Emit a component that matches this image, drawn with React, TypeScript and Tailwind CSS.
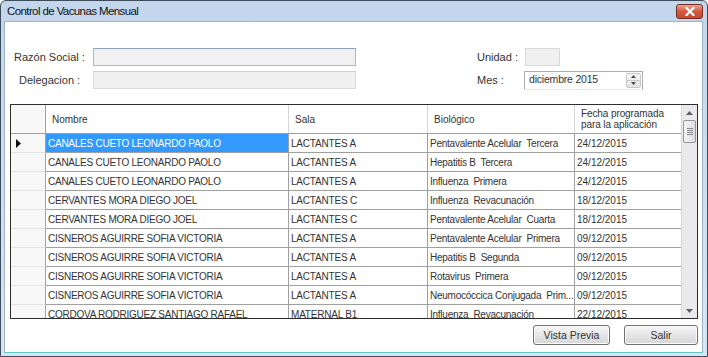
import React from 'react';

type Fila = { nombre: string; sala: string; biologico: string; fecha: string };

const filas: Fila[] = [
  { nombre: 'CANALES CUETO LEONARDO PAOLO', sala: 'LACTANTES A', biologico: 'Pentavalente Acelular  Tercera', fecha: '24/12/2015' },
  { nombre: 'CANALES CUETO LEONARDO PAOLO', sala: 'LACTANTES A', biologico: 'Hepatitis B  Tercera', fecha: '24/12/2015' },
  { nombre: 'CANALES CUETO LEONARDO PAOLO', sala: 'LACTANTES A', biologico: 'Influenza  Primera', fecha: '24/12/2015' },
  { nombre: 'CERVANTES MORA DIEGO JOEL', sala: 'LACTANTES C', biologico: 'Influenza  Revacunación', fecha: '18/12/2015' },
  { nombre: 'CERVANTES MORA DIEGO JOEL', sala: 'LACTANTES C', biologico: 'Pentavalente Acelular  Cuarta', fecha: '18/12/2015' },
  { nombre: 'CISNEROS AGUIRRE SOFIA VICTORIA', sala: 'LACTANTES A', biologico: 'Pentavalente Acelular  Primera', fecha: '09/12/2015' },
  { nombre: 'CISNEROS AGUIRRE SOFIA VICTORIA', sala: 'LACTANTES A', biologico: 'Hepatitis B  Segunda', fecha: '09/12/2015' },
  { nombre: 'CISNEROS AGUIRRE SOFIA VICTORIA', sala: 'LACTANTES A', biologico: 'Rotavirus  Primera', fecha: '09/12/2015' },
  { nombre: 'CISNEROS AGUIRRE SOFIA VICTORIA', sala: 'LACTANTES A', biologico: 'Neumocóccica Conjugada  Prim...', fecha: '09/12/2015' },
  { nombre: 'CORDOVA RODRIGUEZ SANTIAGO RAFAEL', sala: 'MATERNAL B1', biologico: 'Influenza  Revacunación', fecha: '22/12/2015' },
];

const Boton = ({ label, ancho }: { label: string; ancho: string }) => (
  <button className={`${ancho} h-[20px] rounded-[3px] border border-[#707070] bg-gradient-to-b from-[#f6f6f6] via-[#e6e6e6] to-[#d6d6d6] text-[10.5px] text-[#333] leading-none shadow-[inset_0_0_0_1px_#fcfcfc]`}>
    {label}
  </button>
);

const App: React.FC = () => {
  return (
    <div className="w-[708px] h-[357px] flex flex-col bg-gradient-to-b from-[#c3d6eb] to-[#d8e6f4] border border-[#3d4d5e] rounded-t-[6px] overflow-hidden text-[#1e1e1e]" style={{ fontFamily: '"Liberation Sans", Arial, sans-serif' }}>
      {/* barra de titulo */}
      <div className="h-[20px] shrink-0 flex items-start justify-between pl-[6px] pr-[4px]">
        <span className="text-[11.5px] tracking-[-0.6px] leading-[20px] text-[#111]">Control de Vacunas Mensual</span>
        <button className="mt-[3px] w-[27px] h-[15px] rounded-[3px] border border-[#7a2b20] bg-gradient-to-b from-[#e9a493] via-[#d2573f] to-[#c84a30] flex items-center justify-center">
          <svg width="10" height="9" viewBox="0 0 10 9">
            <path d="M1.5 1 L8.5 8 M8.5 1 L1.5 8" stroke="#fff" strokeWidth="2.2" strokeLinecap="square" />
          </svg>
        </button>
      </div>

      {/* contenido */}
      <div className="flex-1 ml-[3px] mr-[4px] mb-[3px] bg-white border border-[#9fb3c8] border-b-[#5fc6c4] flex flex-col">
        {/* filtros */}
        <div className="flex pt-[26px] text-[#333]">
          <div className="flex flex-col gap-[5px]">
            <div className="flex items-center h-[18px]">
              <span className="w-[88px] pl-[9px] text-[11px]">Razón Social :</span>
              <div className="w-[263px] h-[18px] bg-[#f1f1f1] border border-[#a9b9ca] border-t-[#8fa3b7]" />
            </div>
            <div className="flex items-center h-[18px]">
              <span className="w-[88px] pl-[14px] text-[11px]">Delegacion :</span>
              <div className="w-[263px] h-[18px] bg-[#f0f0f0] border border-[#dadada] border-t-[#cfcfcf]" />
            </div>
          </div>
          <div className="flex flex-col gap-[5px] ml-[121px]">
            <div className="flex items-center h-[18px]">
              <span className="w-[48px] text-[11px]">Unidad :</span>
              <div className="w-[35px] h-[18px] bg-[#f0f0f0] border border-[#dadada]" />
            </div>
            <div className="flex items-center h-[18px]">
              <span className="w-[47px] text-[11px]">Mes :</span>
              <div className="w-[119px] h-[19px] bg-white border border-[#abadb3] border-b-[#e3e9ef] flex items-center justify-between pl-[4px] pr-[1px]">
                <span className="text-[10.5px] tracking-[-0.2px]">diciembre 2015</span>
                <div className="w-[15px] h-[15px] flex flex-col border border-[#c8c8c8] rounded-[2px] bg-gradient-to-b from-[#f7f7f7] to-[#e4e4e4]">
                  <div className="flex-1 flex items-center justify-center border-b border-[#c8c8c8]">
                    <svg width="5" height="3" viewBox="0 0 5 3"><path d="M0 3 L2.5 0 L5 3 Z" fill="#4a4a4a" /></svg>
                  </div>
                  <div className="flex-1 flex items-center justify-center">
                    <svg width="5" height="3" viewBox="0 0 5 3"><path d="M0 0 L2.5 3 L5 0 Z" fill="#4a4a4a" /></svg>
                  </div>
                </div>
              </div>
            </div>
          </div>
        </div>

        {/* grilla */}
        <div className="ml-[5px] mt-[15px] w-[688px]">
          <div className="h-[215px] border border-[#2e2e2e] flex overflow-hidden">
            <div className="w-[670px] flex flex-col">
              <div className="h-[29px] shrink-0 flex border-b border-[#a0a0a0] text-[10px] text-[#333] bg-white">
                <div className="w-[35px] bg-[#f8f8f8] border-r border-[#a0a0a0]" />
                <div className="w-[243px] border-r border-[#d5d5d5] pl-[6px] flex items-center">Nombre</div>
                <div className="w-[139px] border-r border-[#d5d5d5] pl-[6px] flex items-center">Sala</div>
                <div className="w-[147px] border-r border-[#d5d5d5] pl-[6px] flex items-center">Biológico</div>
                <div className="w-[106px] pl-[6px] flex flex-col justify-center leading-[11px] tracking-[-0.1px]">
                  <span>Fecha programada</span>
                  <span>para la aplicación</span>
                </div>
              </div>
              {filas.map((f, i) => (
                <div key={i} className="h-[19px] shrink-0 flex text-[10px] text-[#333] leading-[18px] whitespace-pre">
                  <div className="w-[35px] bg-[#f8f8f8] border-r border-b border-r-[#a0a0a0] border-b-[#e4e4e4] flex items-center pl-[5px]">
                    {i === 0 && (
                      <svg width="5" height="9" viewBox="0 0 5 9"><path d="M0 0 L5 4.5 L0 9 Z" fill="#111" /></svg>
                    )}
                  </div>
                  <div className={`w-[243px] border-r border-b border-[#a0a0a0] pl-[2px] pt-[1px] overflow-hidden tracking-[-0.25px] ${i === 0 ? 'bg-[#3399ff] text-white' : ''}`}>{f.nombre}</div>
                  <div className="w-[139px] border-r border-b border-[#a0a0a0] pl-[2px] pt-[1px] overflow-hidden tracking-[-0.2px]">{f.sala}</div>
                  <div className="w-[147px] border-r border-b border-[#a0a0a0] pl-[2px] pt-[1px] overflow-hidden tracking-[-0.25px]">{f.biologico}</div>
                  <div className="w-[106px] border-b border-[#a0a0a0] pl-[2px] pt-[1px] overflow-hidden">{f.fecha}</div>
                </div>
              ))}
            </div>
            {/* barra de desplazamiento */}
            <div className="w-[16px] bg-[#eaeaea] border-l border-[#d8d8d8] flex flex-col items-center">
              <div className="h-[15px] w-full flex items-center justify-center">
                <svg width="7" height="4" viewBox="0 0 7 4"><path d="M0 4 L3.5 0 L7 4 Z" fill="#606060" /></svg>
              </div>
              <div className="w-[13px] h-[23px] rounded-[2px] border border-[#979797] bg-gradient-to-r from-[#f4f4f4] to-[#dedede] flex flex-col items-center justify-center gap-[1px]">
                <div className="w-[6px] h-[1px] bg-[#8a8a8a]" />
                <div className="w-[6px] h-[1px] bg-[#8a8a8a]" />
                <div className="w-[6px] h-[1px] bg-[#8a8a8a]" />
                <div className="w-[6px] h-[1px] bg-[#8a8a8a]" />
              </div>
              <div className="flex-1" />
              <div className="h-[15px] w-full flex items-center justify-center">
                <svg width="7" height="4" viewBox="0 0 7 4"><path d="M0 0 L3.5 4 L7 0 Z" fill="#606060" /></svg>
              </div>
            </div>
          </div>
          <div className="flex justify-end gap-[14px] mt-[6px]">
            <Boton label="Vista Previa" ancho="w-[77px]" />
            <Boton label="Salir" ancho="w-[74px]" />
          </div>
        </div>
      </div>
    </div>
  );
};

export default App;
